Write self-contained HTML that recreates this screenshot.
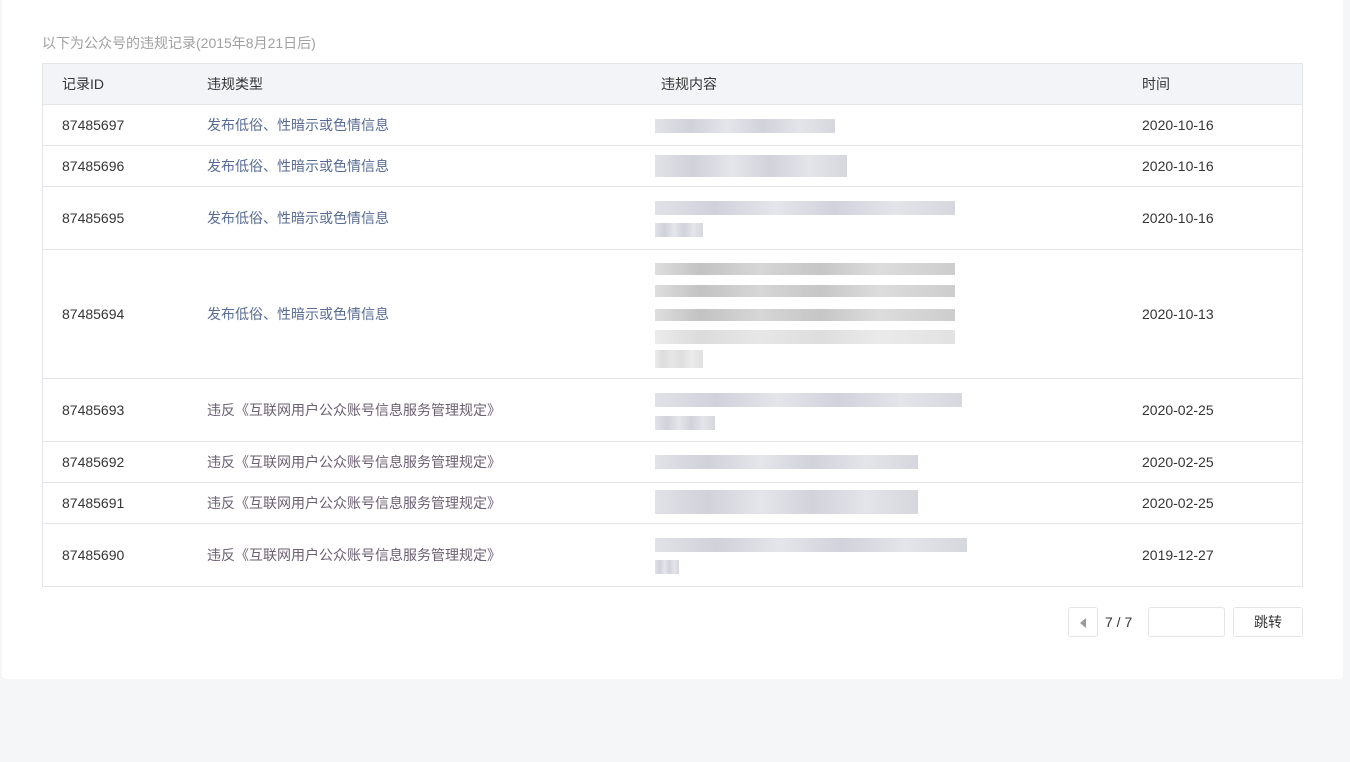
<!DOCTYPE html>
<html><head><meta charset="utf-8"><style>
body{margin:0;background:#f5f6f8;font-family:"Liberation Sans","Noto Sans CJK SC",sans-serif;width:1350px;height:762px;overflow:hidden;position:relative}
.card{position:absolute;left:2px;top:0;width:1341px;height:679px;background:#fff;border-radius:0 0 4px 4px}
.title{position:absolute;left:42px;top:33px;font-size:14px;color:#a0a0a0}
.tbl{position:absolute;left:42px;top:63px;width:1259px;border:1px solid #e4e5ea;border-bottom:none}
.row{position:relative;border-bottom:1px solid #e4e5ea;font-size:14px;color:#353535}
.row span{position:absolute;top:50%;transform:translateY(-50%);white-space:nowrap}
.hd{background:#f3f4f7;height:40px}
.c1{left:19px}.c2{left:164px}.c4{left:1099px}
.lk{color:#576b95}
.b{position:absolute;left:612px;background:linear-gradient(90deg,#dcdde3,#c8c9d3 20%,#e0e1e7 40%,#c9cad4 60%,#dfe0e6 80%,#cfd0d8);opacity:.85}
.g{background:linear-gradient(90deg,#d8d8d8,#b8b8b8 15%,#cfcfcf 35%,#bcbcbc 55%,#d6d6d6 75%,#c4c4c4)}
.pg{position:absolute;top:607px;height:30px;border:1px solid #e4e5ea;border-radius:3px;background:#fff;box-sizing:border-box;font-size:14px;color:#353535;text-align:center;line-height:28px}
</style></head><body>
<div class="card"></div>
<div class="title">以下为公众号的违规记录(2015年8月21日后)</div>
<div class="tbl">
<div class="row hd"><span class="c1">记录ID</span><span class="c2">违规类型</span><span style="left:618px">违规内容</span><span class="c4">时间</span></div>
<div class="row" style="height:40px"><span class="c1">87485697</span><span class="c2 lk">发布低俗、性暗示或色情信息</span><div class="b" style="top:14px;width:180px;height:14px"></div><span class="c4">2020-10-16</span></div>
<div class="row" style="height:40px"><span class="c1">87485696</span><span class="c2 lk">发布低俗、性暗示或色情信息</span><div class="b" style="top:9px;width:192px;height:22px"></div><span class="c4">2020-10-16</span></div>
<div class="row" style="height:62px"><span class="c1">87485695</span><span class="c2 lk">发布低俗、性暗示或色情信息</span><div class="b" style="top:14px;width:300px;height:14px"></div><div class="b" style="top:36px;width:48px;height:14px"></div><span class="c4">2020-10-16</span></div>
<div class="row" style="height:128px"><span class="c1">87485694</span><span class="c2 lk">发布低俗、性暗示或色情信息</span><div class="b g" style="top:13px;width:300px;height:12px"></div><div class="b g" style="top:35px;width:300px;height:12px"></div><div class="b g" style="top:59px;width:300px;height:12px"></div><div class="b g" style="top:80px;width:300px;height:14px;opacity:.5"></div><div class="b g" style="top:100px;width:48px;height:18px;opacity:.5"></div><span class="c4">2020-10-13</span></div>
<div class="row" style="height:62px"><span class="c1">87485693</span><span class="c2" style="color:#6b5f72">违反《互联网用户公众账号信息服务管理规定》</span><div class="b" style="top:14px;width:307px;height:14px"></div><div class="b" style="top:37px;width:60px;height:14px"></div><span class="c4">2020-02-25</span></div>
<div class="row" style="height:40px"><span class="c1">87485692</span><span class="c2" style="color:#6b5f72">违反《互联网用户公众账号信息服务管理规定》</span><div class="b" style="top:13px;width:263px;height:14px"></div><span class="c4">2020-02-25</span></div>
<div class="row" style="height:40px"><span class="c1">87485691</span><span class="c2" style="color:#6b5f72">违反《互联网用户公众账号信息服务管理规定》</span><div class="b" style="top:7px;width:263px;height:24px"></div><span class="c4">2020-02-25</span></div>
<div class="row" style="height:62px"><span class="c1">87485690</span><span class="c2" style="color:#6b5f72">违反《互联网用户公众账号信息服务管理规定》</span><div class="b" style="top:14px;width:312px;height:14px"></div><div class="b" style="top:36px;width:24px;height:14px"></div><span class="c4">2019-12-27</span></div>
</div>
<div class="pg" style="left:1068px;width:30px"><svg width="8" height="10" viewBox="0 0 8 10" style="margin-top:10px"><path d="M7 0L1 5L7 10Z" fill="#999"/></svg></div>
<div style="position:absolute;left:1105px;top:614px;font-size:14px;color:#353535">7 / 7</div>
<div class="pg" style="left:1148px;width:77px"></div>
<div class="pg" style="left:1233px;width:70px">跳转</div>
</body></html>
